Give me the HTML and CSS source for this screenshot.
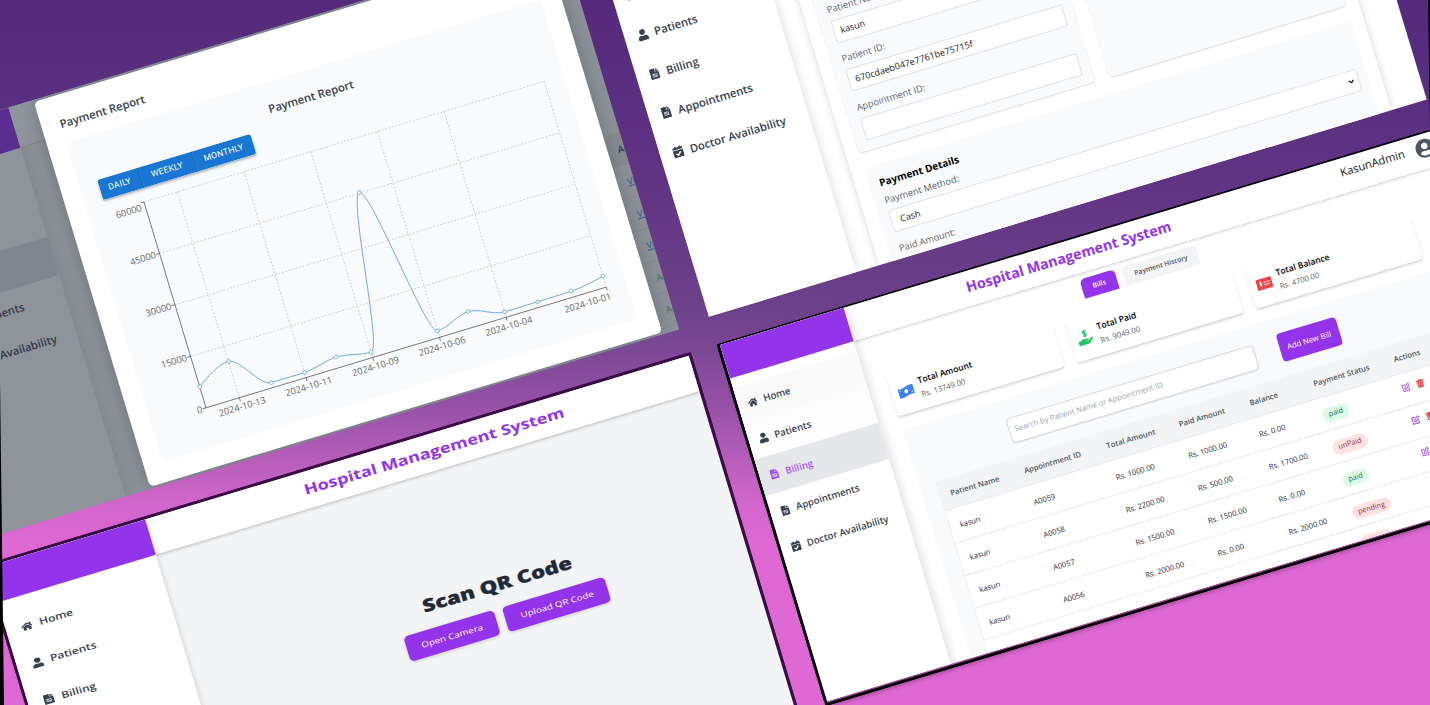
FILE: index.html
```html
<!DOCTYPE html>
<html lang="en">
<head>
<meta charset="utf-8">
<title>Hospital Management System</title>
<link rel="stylesheet" href="styles.css">
</head>
<body>
<svg width="0" height="0" class="defs" aria-hidden="true">
  <symbol id="i-home" viewBox="0 0 576 512"><path d="M280.37 148.26L96 300.11V464a16 16 0 0 0 16 16l112.06-.29a16 16 0 0 0 15.92-16V368a16 16 0 0 1 16-16h64a16 16 0 0 1 16 16v95.64a16 16 0 0 0 16 16.05L464 480a16 16 0 0 0 16-16V300L295.67 148.26a12.19 12.19 0 0 0-15.3 0zM571.6 251.47L488 182.56V44.05a12 12 0 0 0-12-12h-56a12 12 0 0 0-12 12v72.61L318.47 43a48 48 0 0 0-61 0L4.34 251.47a12 12 0 0 0-1.6 16.9l25.5 31A12 12 0 0 0 45.15 301l235.22-193.74a12.19 12.19 0 0 1 15.3 0L530.9 301a12 12 0 0 0 16.9-1.6l25.5-31a12 12 0 0 0-1.7-16.93z"/></symbol>
  <symbol id="i-user" viewBox="0 0 448 512"><path d="M224 256c70.7 0 128-57.3 128-128S294.7 0 224 0 96 57.3 96 128s57.3 128 128 128zm89.6 32h-16.7c-22.2 10.2-46.9 16-72.9 16s-50.6-5.8-72.9-16h-16.7C60.2 288 0 348.2 0 422.4V464c0 26.5 21.500 48 48 48h352c26.500 0 48-21.500 48-48v-41.600c0-74.200-60.200-134.400-134.400-134.400z"/></symbol>
  <symbol id="i-file" viewBox="0 0 384 512"><path d="M24 0h200v130c0 13 11 24 24 24h136v334c0 13-11 24-24 24H24c-13 0-24-11-24-24V24C0 11 11 0 24 0zM252 0l132 132H252z"/><path fill="none" stroke="#fff" stroke-width="26" d="M104 256h176v120H104zM104 256l176 120"/></symbol>
  <symbol id="i-cal" viewBox="0 0 448 512"><path d="M436 160H12c-6.627 0-12-5.373-12-12v-36c0-26.51 21.49-48 48-48h48V12c0-6.627 5.373-12 12-12h40c6.627 0 12 5.373 12 12v52h128V12c0-6.627 5.373-12 12-12h40c6.627 0 12 5.373 12 12v52h48c26.51 0 48 21.49 48 48v36c0 6.627-5.373 12-12 12zM12 192h424c6.627 0 12 5.373 12 12v260c0 26.51-21.49 48-48 48H48c-26.51 0-48-21.49-48-48V204c0-6.627 5.373-12 12-12zm333.296 95.947l-28.169-28.398c-4.667-4.705-12.265-4.736-16.97-.068L194.12 364.665l-45.98-46.352c-4.667-4.705-12.266-4.736-16.971-.068l-28.397 28.17c-4.705 4.667-4.736 12.265-.068 16.97l82.601 83.269c4.667 4.705 12.265 4.736 16.97.068l142.953-141.805c4.705-4.667 4.736-12.265.068-16.97z"/></symbol>
  <symbol id="i-edit" viewBox="0 0 24 24"><path fill="none" stroke="currentColor" stroke-width="2.600" d="M12 4H4v17h16v-8M9 16v-4l10-10 4 4-10 10z"/></symbol>
  <symbol id="i-trash" viewBox="0 0 24 24"><path fill-rule="evenodd" d="M8 1h8v2h6v4H2V3h6zM4 8h16l-1 15H5zM8 11v9h1.500v-9zM14.500 11v9H16v-9z"/></symbol>
</svg>

<main class="canvas">
  <section class="win report">
    <aside class="side">
      <div class="side-head"></div>
      <ul class="nav">
        <li></li>
        <li></li>
        <li class="on"></li>
        <li>Appointments</li>
        <li>Doctor Availability</li>
      </ul>
    </aside>
    <div class="behind">
      <div class="bar"></div>
      <ul class="actions">
        <li class="head">Actions</li>
        <li><u>View</u></li>
        <li><u>View</u></li>
        <li><u>View</u></li>
        <li class="add">Add</li>
        <li class="add">Add</li>
      </ul>
    </div>
    <div class="modal">
      <h2>Payment Report</h2>
      <div class="panel">
        <h3>Payment Report</h3>
        <div class="group"><button>DAILY</button><button>WEEKLY</button><button>MONTHLY</button></div>
        <svg class="chart" viewBox="18.500 114 496.500 267.500" width="496.500" height="267.500">
          <g class="grid">
            <path d="M76 127.500H494M76 181.300H494M76 235H494M76 288.800H494"/>
            <path d="M110.800 127.500V342.500M180.500 127.500V342.500M250.200 127.500V342.500M319.800 127.500V342.500M389.500 127.500V342.500M494 127.500V342.500"/>
          </g>
          <path class="axis" d="M76 127.500V342.500H494M72.500 127.500H76M72.500 181.300H76M72.500 235H76M72.500 288.800H76M72.500 342.500H76M110.800 342.500v3.500M180.500 342.500v3.500M250.200 342.500v3.500M319.800 342.500v3.500M389.500 342.500v3.500M494 342.500v3.500"/>
          <g class="ticks end">
            <text x="72" y="135.500">60000</text><text x="72" y="184.600">45000</text><text x="72" y="238.300">30000</text><text x="72" y="292.100">15000</text><text x="72" y="345.800">0</text>
            <text x="496" y="355.500">2024-10-01</text>
          </g>
          <g class="ticks mid">
            <text x="111" y="355">2024-10-13</text><text x="180.500" y="355">2024-10-11</text><text x="250.200" y="355">2024-10-09</text><text x="319.800" y="355">2024-10-06</text><text x="389.500" y="355">2024-10-04</text>
          </g>
          <path class="line" d="M76 320.700C87.600 312.700 99.200 304.700 110.800 304.700C122.400 304.700 134 337.200 145.700 337.200C157.300 337.200 168.900 337.200 180.500 337.200C192.100 337.200 203.700 331.400 215.300 331.400C227 331.400 238.600 337 250.200 337C261.800 337 273.400 180.700 285 180.700C296.600 180.700 308.200 335.700 319.800 335.700C331.500 335.700 343.100 326 354.700 326C366.300 326 377.900 336.900 389.500 336.900C401.100 336.900 412.700 336.800 424.300 336.700C436 336.600 447.600 336.600 459.200 336.300C470.800 336 482.400 333.500 494 331.100"/>
          <g class="dots"><circle cx="76" cy="320.700" r="1.900"/><circle cx="110.800" cy="304.700" r="1.900"/><circle cx="145.700" cy="337.200" r="1.900"/><circle cx="180.500" cy="337.200" r="1.900"/><circle cx="215.300" cy="331.400" r="1.900"/><circle cx="250.200" cy="337" r="1.900"/><circle cx="285" cy="180.700" r="1.900"/><circle cx="319.800" cy="335.700" r="1.900"/><circle cx="354.700" cy="326" r="1.900"/><circle cx="389.500" cy="336.900" r="1.900"/><circle cx="424.300" cy="336.700" r="1.900"/><circle cx="459.200" cy="336.300" r="1.900"/><circle cx="494" cy="331.100" r="1.900"/></g>
        </svg>
      </div>
    </div>
  </section>

  <section class="win form">
    <aside class="side">
      <ul class="nav">
        <li><svg class="ic"><use href="#i-home"/></svg>Home</li>
        <li><svg class="ic"><use href="#i-user"/></svg>Patients</li>
        <li><svg class="ic"><use href="#i-file"/></svg>Billing</li>
        <li><svg class="ic"><use href="#i-file"/></svg>Appointments</li>
        <li><svg class="ic"><use href="#i-cal"/></svg>Doctor Availability</li>
      </ul>
    </aside>
    <div class="sheet">
      <div class="cols">
        <div class="box">
          <label>Patient Name:</label><div class="field">kasun</div>
          <label>Patient ID:</label><div class="field">670cdaeb047e7761be75715f</div>
          <label>Appointment ID:</label><div class="field"></div>
        </div>
        <div class="box"></div>
      </div>
      <div class="box pay">
        <h3>Payment Details</h3>
        <label>Payment Method:</label>
        <div class="field select">Cash<svg viewBox="0 0 10 6" width="6" height="4"><path d="M1 1l4 4 4-4" fill="none" stroke="#000" stroke-width="2"/></svg></div>
        <label>Paid Amount:</label>
      </div>
    </div>
  </section>

  <section class="win scan">
    <aside class="side">
      <div class="side-head"></div>
      <ul class="nav">
        <li><svg class="ic"><use href="#i-home"/></svg>Home</li>
        <li><svg class="ic"><use href="#i-user"/></svg>Patients</li>
        <li><svg class="ic"><use href="#i-file"/></svg>Billing</li>
      </ul>
    </aside>
    <div class="body">
      <header><h1>Hospital Management System</h1></header>
      <h2>Scan QR Code</h2>
      <div class="btns"><button>Open Camera</button><button>Upload QR Code</button></div>
    </div>
  </section>

  <section class="win bills">
    <aside class="side">
      <div class="side-head"></div>
      <ul class="nav">
        <li class="hov"><svg class="ic"><use href="#i-home"/></svg>Home</li>
        <li class="fade"><svg class="ic"><use href="#i-user"/></svg>Patients</li>
        <li class="on"><svg class="ic"><use href="#i-file"/></svg>Billing</li>
        <li><svg class="ic"><use href="#i-file"/></svg>Appointments</li>
        <li><svg class="ic"><use href="#i-cal"/></svg>Doctor Availability</li>
      </ul>
    </aside>
    <div class="body">
      <header>
        <h1>Hospital Management System</h1>
        <span class="who">KasunAdmin</span>
        <svg class="avatar" viewBox="0 0 496 512"><path d="M248 8C111 8 0 119 0 256s111 248 248 248 248-111 248-248S385 8 248 8zm0 96c48.600 0 88 39.400 88 88s-39.400 88-88 88-88-39.400-88-88 39.400-88 88-88zm0 344c-58.700 0-111.300-26.600-146.500-68.200 18.800-35.400 55.600-59.800 98.500-59.800 2.400 0 4.800.4 7.100 1.100 13 4.200 26.600 6.900 40.900 6.900 14.300 0 28-2.700 40.900-6.900 2.300-.7 4.700-1.100 7.100-1.100 42.900 0 79.700 24.400 98.500 59.800C359.300 421.400 306.700 448 248 448z"/></svg>
      </header>
      <div class="tabs"><span class="tab cur">Bills</span><span class="tab">Payment History</span></div>
      <div class="cards">
        <div class="card">
          <svg class="cic blue" viewBox="0 0 32 26"><path fill-rule="evenodd" d="M0 4.500C11 9.500 20-1.500 32 2.500v19C20 17.500 11 28 0 23.500zM16 8.500c-2.300 0-3.700 2-3.700 4.500s1.400 4.500 3.700 4.500 3.700-2 3.700-4.500-1.400-4.500-3.700-4.500zM3 8.500v2.500c1.500 0 2.500-.8 2.800-2zM29 17.500V15c-1.500 0-2.500.6-2.800 1.800z"/></svg>
          <div><h4>Total Amount</h4><p>Rs. 13749.00</p></div>
        </div>
        <div class="card">
          <svg class="cic green" viewBox="0 0 32 32"><path fill="none" stroke="currentColor" stroke-width="2.400" d="M19.500 4.500C17.500 2.500 13 2.800 13 5.700c0 3.100 6.500 1.700 6.500 4.800 0 3-5 3.200-7 1M16.300 0v15"/><path d="M0 21h5c3-3 8-3.500 11-1.500h4c2.500 0 2.300 3.500 0 3.500h-5v1h6l6-5c2.500-1.500 4.600.8 3 3l-8 7c-1 .8-2 1-3 1H0z"/></svg>
          <div><h4>Total Paid</h4><p>Rs. 9049.00</p></div>
        </div>
        <div class="card">
          <svg class="cic red" viewBox="0 0 32 26"><path d="M0 2h32v22H0z"/><path fill="none" stroke="#fff" stroke-width="1.800" d="M11 9.500c-1-1.200-4.200-1-4.200.8 0 2 4.400 1.500 4.400 3.600 0 2-3.600 2-4.700.6M9 7v11M15 10.500h5M22 10.500h5.500M15 15.500h12.500"/></svg>
          <div><h4>Total Balance</h4><p>Rs. 4700.00</p></div>
        </div>
      </div>
      <div class="list">
        <div class="tools"><div class="search">Search by Patient Name or Appointment ID</div><button>Add New Bill</button></div>
        <div class="table">
          <div class="row th"><span>Patient Name</span><span>Appointment ID</span><span>Total Amount</span><span>Paid Amount</span><span>Balance</span><span>Payment Status</span><span>Actions</span></div>
          <div class="row"><span>kasun</span><span>A0059</span><span>Rs. 1000.00</span><span>Rs. 1000.00</span><span>Rs. 0.00</span><span><b class="pill ok">paid</b></span><span class="act"><svg class="ed"><use href="#i-edit"/></svg><svg class="tr"><use href="#i-trash"/></svg></span></div>
          <div class="row"><span>kasun</span><span>A0058</span><span>Rs. 2200.00</span><span>Rs. 500.00</span><span>Rs. 1700.00</span><span><b class="pill">unPaid</b></span><span class="act"><svg class="ed"><use href="#i-edit"/></svg><svg class="tr"><use href="#i-trash"/></svg></span></div>
          <div class="row"><span>kasun</span><span>A0057</span><span>Rs. 1500.00</span><span>Rs. 1500.00</span><span>Rs. 0.00</span><span><b class="pill ok">paid</b></span><span class="act"><svg class="ed"><use href="#i-edit"/></svg><svg class="tr"><use href="#i-trash"/></svg></span></div>
          <div class="row"><span>kasun</span><span>A0056</span><span>Rs. 2000.00</span><span>Rs. 0.00</span><span>Rs. 2000.00</span><span><b class="pill">pending</b></span><span class="act"><svg class="ed"><use href="#i-edit"/></svg><svg class="tr"><use href="#i-trash"/></svg></span></div>
          <div class="row last"><span></span><span></span><span></span><span></span><span></span><span><b class="pill blank"></b></span><span></span></div>
        </div>
      </div>
    </div>
  </section>
  <div class="edge left"></div>
  <div class="edge right"></div>
</main>
</body>
</html>
```
FILE: styles.css
```css
* { box-sizing: border-box; margin: 0; padding: 0; }
body { overflow: hidden; font-family: "Open Sans", "Noto Sans", sans-serif; color: #374151; }
ul { list-style: none; }
button { border: 0; font: inherit; color: inherit; }
.defs { position: absolute; }
svg { fill: currentColor; flex: none; }

.canvas {
  position: relative; width: 1430px; height: 705px; overflow: hidden;
  background: linear-gradient(180deg, #552a7c 0, #5a2e80 100px, #623684 200px, #6b4089 300px, #7b4896 350px, #9350a4 400px, #b05cb6 450px, #cf66ca 500px, #de69d4 540px);
}
.edge { position: absolute; background: #000; }
.edge.left { left: 0; top: 380px; width: 4px; height: 325px; clip-path: polygon(0 0, 100% 100%, 0 100%); }
.edge.right { right: 0; top: 0; width: 2px; height: 130px; clip-path: polygon(0 0, 100% 0, 100% 100%); }

.win { position: absolute; display: flex; transform-origin: 0 0; transform: rotate(-16.75deg); white-space: nowrap; }
.win > .side { flex: none; background: #fff; }
.side-head { background: #9333ea; }
.nav li { display: flex; align-items: center; font-weight: 600; }
.ic { flex: none; }

/* payment report window */
.report { left: -139.300px; top: 151.900px; width: 732px; height: 405.500px; background: #8c9198; overflow: hidden; transform: rotate(-16.780deg); font-size: 11.200px; color: #2f3847; }
.report .side { width: 154px; background: #8f949b; }
.report .side-head { height: 41.500px; background: #592c8f; }
.report .nav { margin-top: 14px; }
.report .nav li { height: 39.700px; padding-left: 34.500px; }
.report .nav li.on { background: #7f868f; }
.behind { flex: 1; display: flex; flex-direction: column; align-items: flex-end; background: linear-gradient(90deg, #858a91 0, #8c9198 14px); }
.bar { align-self: stretch; height: 41.500px; border-bottom: 1px solid #81868d; background: #8f949b; }
.actions { width: 110px; margin-top: 158px; }
.actions li { height: 33.500px; line-height: 33.500px; padding-left: 103px; font-size: 9.500px; color: #2d5aa0; border-bottom: 1px solid #858990; }
.actions .head { background: #858a91; color: #2f3847; font-weight: 600; }
.actions .add { color: #2d7a50; }
.modal { position: absolute; left: 180px; top: 2px; width: 535px; height: 401.500px; padding: 19px 20px 20px 18.500px; border-radius: 5px; background: #fff; box-shadow: 0 0 16px rgba(40, 46, 56, .3); }
.modal h2, .modal h3 { font-size: 11.300px; line-height: 20px; font-weight: 600; color: #374151; }
.panel { height: 334px; margin-top: 8.600px; border-radius: 5px; background: #f9fafb; display: flex; flex-direction: column; }
.panel h3 { margin-top: 17px; text-align: center; }
.group { display: flex; width: 160px; height: 21.500px; margin: 8px 0 0 19px; border-radius: 2.500px; overflow: hidden; box-shadow: 0 1.500px 2.500px rgba(0, 0, 0, .35); }
.group button { flex: 1 1 56px; background: #1976d2; color: #fff; font: 400 8.600px/21.500px Roboto, "Liberation Sans", sans-serif; letter-spacing: .25px; border-right: .8px solid #1565c0; }
.group button:first-child { flex-basis: 43px; }
.group button:last-child { flex-basis: 61px; border: 0; }
.grid path { fill: none; stroke: #ccc; stroke-width: .9; stroke-dasharray: 1.800 1.800; }
.axis { fill: none; stroke: #666; stroke-width: .8; }
.ticks { font-size: 9.300px; fill: #666; }
.end { text-anchor: end; }
.mid { text-anchor: middle; }
.line { fill: none; stroke: #6ea8ee; stroke-width: .9; }
.dots circle { fill: #fff; stroke: #6ea8ee; stroke-width: .8; }

/* billing form window */
.form { left: 593px; top: -66.100px; width: 750px; height: 400px; overflow: hidden; background: #fff; transform: rotate(-16.850deg); color: #111827; }
.form .side { width: 154px; box-shadow: 0 0 12px rgba(0, 0, 0, .16); }
.form .nav { margin-top: 49.500px; color: #374151; }
.form .nav li { height: 40.800px; padding-left: 12.500px; gap: 7px; font-size: 11.300px; }
.form .ic { width: 11px; height: 11.800px; }
.sheet { width: 535px; margin-left: 24px; padding: 0 13px; box-shadow: 0 0 9px rgba(0, 0, 0, .16); }
.cols { display: flex; gap: 14.500px; height: 287px; }
.box { width: 247px; padding: 0 10px 0 11px; border-radius: 5px; background: #f9fafb; box-shadow: 0 1px 1.500px rgba(0, 0, 0, .14); }
.cols .box:first-child { padding-top: 134px; }
.box label { display: block; height: 15px; margin-bottom: 3px; font-size: 9.300px; line-height: 14px; color: #5b6472; }
.field { height: 23.700px; margin-bottom: 9.100px; padding-left: 6px; border: .8px solid #dfe2e7; border-radius: 2.500px; background: #fff; font-size: 9.100px; line-height: 21.500px; color: #222; }
.box.pay { width: auto; height: 120px; margin-top: 16px; padding: 8px 9.500px 0 11px; box-shadow: none; }
.pay h3 { font-size: 10.100px; line-height: 14px; color: #000; margin-bottom: 5px; margin-top: 2.500px; }
.field.select { display: flex; justify-content: space-between; align-items: center; padding: 0 3.500px 0 8.500px; margin: -1px 0 10px; }

/* QR window, stretched horizontally */
.scan { left: -13.300px; top: 567px; width: 577px; height: 420px; background: #f3f4f6; transform: rotate(-16.750deg) scaleX(1.270); box-shadow: -2.400px 0 0 #3b0d47, 2.400px 0 0 #3b0d47, -2.400px -3px 0 #3b0d47, 2.400px -3px 0 #3b0d47; }
.scan .side { width: 130.200px; box-shadow: 0 0 6px rgba(0, 0, 0, .18); z-index: 1; }
.scan .side-head { height: 37.300px; }
.scan .nav { margin-top: 11.500px; }
.scan .nav li { height: 38.100px; padding-left: 11.500px; gap: 6px; font-size: 9.500px; }
.scan .ic { width: 9.500px; height: 10.500px; }
.scan .body { flex: 1; display: flex; flex-direction: column; }
.scan header { height: 37px; background: #fff; box-shadow: 0 1px 3px rgba(0, 0, 0, .25); padding-left: 126.500px; }
h1 { color: #9333ea; font-weight: 700; font-size: 14.300px; }
.scan h1 { line-height: 36px; }
.scan h2 { width: 124px; margin: 114px 0 0 188.500px; font-size: 17.600px; line-height: 24px; font-weight: 800; color: #1f2937; text-align: center; -webkit-text-stroke: .3px #1f2937; }
.btns { display: flex; gap: 7.500px; margin: 12px 0 0 168px; color: #fff; font-size: 7.800px; }
.btns button { width: 73.700px; height: 26px; border-radius: 4px; background: #9333ea; box-shadow: 0 1px 3px rgba(0, 0, 0, .18); }
.btns button + button { width: 84px; }

/* bills window */
.bills { left: 720px; top: 345.200px; width: 741px; height: 371.500px; background: #fff; box-shadow: -3px -1.500px 0 #000, 0 -1.500px 0 #000, 0 1.500px 0 #a5509f, -3px 4.200px 0 #000, 0 4.200px 0 #000, 0 6px 4px rgba(0, 0, 0, .25); }
.bills .side { width: 128.500px; box-shadow: 3px 0 10px rgba(0, 0, 0, .12); }
.bills .side-head { height: 34.500px; }
.bills .nav { margin-top: 10.500px; }
.bills .nav li { height: 37.700px; padding-left: 10px; gap: 6.300px; font-size: 9.600px; }
.bills .ic { width: 10px; height: 10.500px; }
.hov { background: #fafafa; }
.fade { background: #fdfdfd; }
.bills .nav .on { background: #e5e7eb; color: #a855f7; }
.bills .body { flex: 1; height: 371.500px; overflow: hidden; }
.bills header { display: flex; height: 34.500px; padding-left: 124px; box-shadow: 0 1px 3px rgba(0, 0, 0, .2); }
.bills h1 { width: 397.500px; line-height: 32px; }
.who { width: 79px; font-size: 11.300px; line-height: 28px; color: #1a1a1a; }
.avatar { width: 19.500px; height: 19.500px; margin-top: 4.500px; fill: #4b5563; }
.tabs { display: flex; gap: 7px; margin: 6.500px 0 0 234px; font-size: 6.900px; line-height: 19.500px; font-weight: 600; text-align: center; }
.tab { width: 78.500px; height: 20.300px; border-radius: 5px 5px 0 0; background: #f3f4f6; color: #4b5563; }
.tab.cur { width: 36.400px; background: #9333ea; color: #fff; }
.cards { display: flex; gap: 13px; margin: 13.700px 0 0 21.500px; }
.card { display: flex; align-items: center; gap: 6px; flex: none; width: 174px; height: 45.500px; padding: 1.500px 0 0 7px; border-radius: 4px; background: #fff; box-shadow: 0 2px 3px -.5px rgba(0, 0, 0, .2); }
.card h4 { font-size: 8.600px; line-height: 13px; font-weight: 600; color: #000; }
.card p { font-size: 7.700px; line-height: 14px; color: #5b6472; }
.cic { width: 16px; height: 16px; }
.blue { color: #3b82f6; }
.green { color: #22c55e; }
.red { color: #ef4444; }
.list { width: 551px; height: 300px; margin: 14px 0 0 21.500px; padding: 16px 16px 0 17px; border-radius: 4px; background: #f9fafb; }
.tools { display: flex; gap: 25px; padding-left: 85px; height: 43px; }
.search { width: 257.500px; height: 25.500px; margin-top: 3px; padding-left: 5px; border: .8px solid #d6d9de; border-radius: 4px; background: #fff; box-shadow: 0 1px 1px rgba(0, 0, 0, .08); font-size: 7.700px; line-height: 23px; color: #9ca3af; }
.tools button { width: 62px; height: 28.500px; border-radius: 4px; background: #9333ea; color: #fff; font-size: 7.800px; }
.table { background: #fff; border-left: .6px solid #eceef1; }
.row { display: grid; grid-template-columns: 77px 86px 75.500px 74px 66.500px 84px 56px; height: 33.700px; border-bottom: .7px solid #e8eaed; font-size: 7.600px; line-height: 35px; color: #1f2937; }
.row span { padding-left: 10px; }
.row.th { height: 31px; line-height: 31.500px; background: #f3f4f6; color: #4b5563; font-weight: 600; font-size: 7.700px; }
.pill { display: inline-block; height: 14.500px; padding: 0 6px; border-radius: 8px; background: #fee2e2; color: #991b1b; font-weight: 500; font-size: 7.300px; line-height: 13.500px; }
.pill.ok { background: #dcfce7; color: #166534; }
.row.last { align-items: start; line-height: 0; }
.pill.blank { width: 33px; margin-top: 8.500px; }
.act { display: flex; gap: 6px; padding-top: 9.500px; }
.row .act { padding-left: 8.500px; }
.ed, .tr { width: 9px; height: 9px; color: #a855f7; }
.tr { color: #ef4444; }
```
